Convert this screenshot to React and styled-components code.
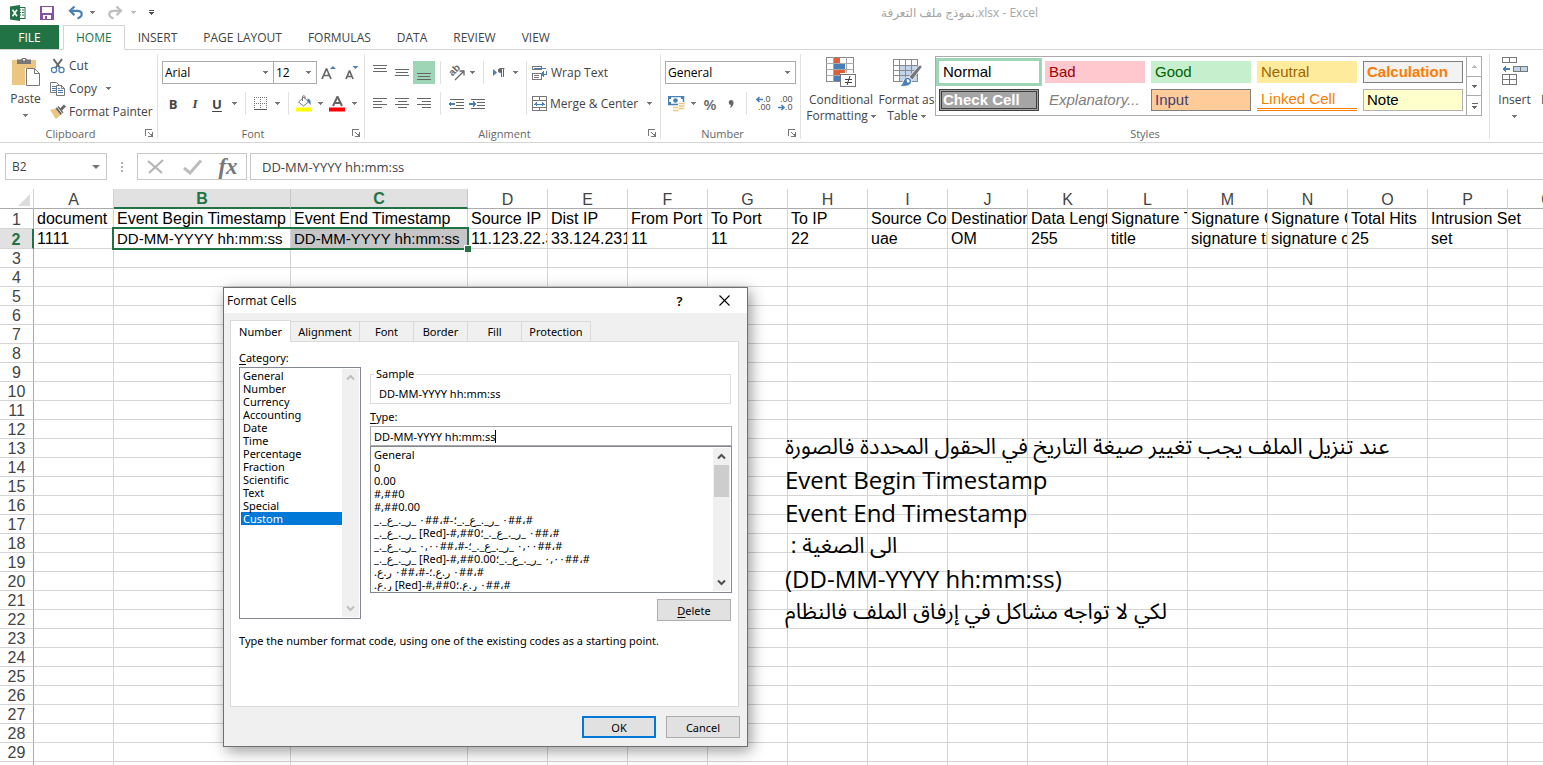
import React from "react";
import styled, { createGlobalStyle, css } from "styled-components";

const ui = '"Open Sans", "Noto Sans", "DejaVu Sans", sans-serif';
const dlg = '"Noto Sans", "Open Sans", "DejaVu Sans", sans-serif';
const arial = '"Liberation Sans", Arial, sans-serif';
const GREEN = "#217346";
const GRAY = "#777";
const BLUE = "#4a7fb5";

const Global = createGlobalStyle`
  *, *::before, *::after { box-sizing: border-box; }
  html, body { margin: 0; height: 100%; overflow: hidden; background: #fff; }
  body { font-family: ${ui}; font-size: 12px; color: #444; }
  button, input, select { font: inherit; color: inherit; margin: 0; padding: 0; border: 0; background: none; border-radius: 0; outline: none; }
  svg { display: block; flex: none; }
`;

const Window = styled.div`
  display: flex;
  flex-direction: column;
  height: 100vh;
`;

/* ---------- title bar and tabs ---------- */
const TitleBar = styled.header`
  display: grid;
  grid-template-columns: 376px 1fr;
  align-items: center;
  height: 25px;
  flex: none;
`;
const QuickAccess = styled.div`
  display: flex;
  align-items: center;
  height: 22px;
  padding-left: 9px;
`;
const QuickButton = styled.button`
  display: flex;
  align-items: center;
  justify-content: center;
  width: ${(p) => p.$w}px;
  height: 22px;
`;
const Caption = styled.h1`
  margin: 0;
  font-size: 12px;
  font-weight: 400;
  text-align: center;
  color: #a6a6a6;
`;
const Tabs = styled.nav`
  display: flex;
  height: 25px;
  flex: none;
  border-bottom: 1px solid #d4d4d4;
`;
const FileTab = styled.button`
  width: 59px;
  height: 24px;
  margin-right: 4px;
  background: ${GREEN};
  color: #fff;
`;
const Tab = styled.button`
  height: 25px;
  padding: 0 13px;
  ${(p) =>
    p.$active &&
    css`
      padding: 0 12px;
      color: ${GREEN};
      background: #fff;
      border: 1px solid #d4d4d4;
      border-bottom-color: #fff;
    `}
`;

/* ---------- ribbon ---------- */
const Ribbon = styled.div`
  display: flex;
  height: 93px;
  flex: none;
  border-bottom: 1px solid #d4d4d4;
  overflow: hidden;
`;
const Group = styled.section`
  display: flex;
  flex-direction: column;
  flex: none;
  width: ${(p) => p.$w}px;
  margin: 4px 0 3px;
  border-right: 1px solid #e1e1e1;
`;
const GroupBody = styled.div`
  display: flex;
  flex: 1;
  min-height: 0;
  padding: ${(p) => p.$pad || "0"};
`;
const GroupFoot = styled.div`
  display: flex;
  align-items: center;
  height: 12px;
  color: #666;
  h2 {
    flex: 1;
    margin: 0;
    font-size: 11px;
    font-weight: 400;
    text-align: center;
  }
`;
const Launcher = styled.button`
  width: 16px;
  height: 12px;
  display: flex;
  align-items: center;
  justify-content: center;
`;
const Stack = styled.div`
  display: flex;
  flex-direction: column;
  gap: ${(p) => p.$gap || 0}px;
`;
const Row = styled.div`
  display: flex;
  align-items: center;
  height: 23px;
`;
const Tool = styled.button`
  display: flex;
  align-items: center;
  justify-content: center;
  flex: none;
  width: ${(p) => p.$w || 22}px;
  height: 23px;
  background: ${(p) => (p.$on ? "#9fd5b7" : "none")};
`;
const LabelTool = styled.button`
  display: flex;
  align-items: center;
  gap: 3px;
  height: 23px;
  white-space: nowrap;
`;
const BigTool = styled.button`
  display: flex;
  flex-direction: column;
  align-items: center;
  justify-content: flex-start;
  flex: none;
  width: ${(p) => p.$w}px;
  padding-top: 3px;
  line-height: 16px;
  white-space: nowrap;
  svg.big { margin-bottom: ${(p) => p.$gap || 4}px; }
`;
const BigLine = styled.span`
  display: flex;
  align-items: center;
  gap: 3px;
  height: 16px;
`;
const Divider = styled.span`
  flex: none;
  width: 11px;
  height: ${(p) => p.$h || 23}px;
  background: linear-gradient(#e1e1e1, #e1e1e1) center / 1px 100% no-repeat;
`;
const Glyph = styled.span`
  font-size: 13px;
  font-weight: ${(p) => (p.$bold ? 700 : 400)};
  font-style: ${(p) => (p.$italic ? "italic" : "normal")};
  font-family: ${(p) => (p.$serif ? '"Liberation Serif", serif' : "inherit")};
  text-decoration: ${(p) => (p.$under ? "underline" : "none")};
  text-underline-offset: 2px;
`;
const PercentGlyph = styled.span`
  font-size: 15px;
  font-weight: 600;
  color: #666;
`;
const SelectWrap = styled.label`
  position: relative;
  display: flex;
  align-items: center;
  width: ${(p) => p.$w}px;
  height: 23px;
  border: 1px solid #ababab;
  margin-right: ${(p) => (p.$join ? -1 : 0)}px;
  color: #000;
  select {
    appearance: none;
    flex: 1;
    height: 21px;
    padding-left: 2px;
    min-width: 0;
  }
  svg { margin-right: 5px; pointer-events: none; }
`;

/* ---------- cell style gallery ---------- */
const Gallery = styled.div`
  display: flex;
  height: 60px;
  margin-top: 2px;
  border: 1px solid #ababab;
`;
const Swatches = styled.div`
  display: grid;
  grid-template-columns: repeat(5, 100px);
  grid-auto-rows: 22px;
  gap: 6px;
  padding: 4px 3px;
`;
const Swatch = styled.button`
  display: flex;
  align-items: center;
  padding: 0 4px 2px;
  font-family: ${arial};
  && { font-size: 15px; }
  white-space: nowrap;
  color: ${(p) => p.$fg};
  background: ${(p) => p.$bg || "#fff"};
  font-weight: ${(p) => (p.$bold ? 700 : 400)};
  font-style: ${(p) => (p.$italic ? "italic" : "normal")};
  ${(p) => p.$line && `box-shadow: inset 0 0 0 1px ${p.$line};`}
  ${(p) => p.$picked && "box-shadow: 0 0 0 3px #9fd5b7;"}
  ${(p) => p.$check && "border: 3px double #3f3f3f; padding: 0 1px 2px;"}
  ${(p) => p.$linked && "border-bottom: 3px double #ff8001; padding-bottom: 0;"}
`;
const GalleryScroll = styled.div`
  display: flex;
  flex-direction: column;
  width: 15px;
  border-left: 1px solid #ababab;
`;
const ScrollStep = styled.button`
  display: flex;
  flex: 1;
  align-items: center;
  justify-content: center;
  & + & { border-top: 1px solid #ababab; }
`;

/* ---------- formula bar ---------- */
const FormulaBar = styled.div`
  display: flex;
  flex: none;
  height: 46px;
  padding: 10px 0 9px 5px;
`;
const NameBox = styled.label`
  display: flex;
  align-items: center;
  width: 102px;
  border: 1px solid #c6c6c6;
  input { flex: 1; min-width: 0; padding-left: 6px; }
  svg { margin-right: 6px; }
`;
const Grip = styled.span`
  display: flex;
  align-items: center;
  justify-content: center;
  width: 30px;
`;
const FormulaTools = styled.div`
  display: flex;
  align-items: center;
  width: 110px;
  border: 1px solid #c6c6c6;
`;
const FxLabel = styled.span`
  font-family: "Liberation Serif", serif;
  font-size: 23px;
  font-style: italic;
  font-weight: 700;
  line-height: 22px;
  color: #777;
`;
const FormulaInput = styled.input`
  && {
    flex: 1;
    min-width: 0;
    margin-left: 3px;
    padding-left: 11px;
    border: 1px solid #c6c6c6;
    border-right: 0;
    font-size: 13px;
  }
`;

/* ---------- sheet ---------- */
const Sheet = styled.main`
  position: relative;
  flex: 1;
  min-height: 0;
  overflow: hidden;
`;
const Grid = styled.table`
  table-layout: fixed;
  width: max(100%, 1588px);
  border-spacing: 0;
  border-collapse: separate;
  font-family: ${arial};
  font-size: 16px;
  line-height: 16px;
  th, td { padding: 2px 0 0; font-weight: 400; }
`;
const ColHead = styled.th`
  height: 20px;
  border-right: 1px solid #d4d4d4;
  border-bottom: 1px solid #ababab;
  ${(p) =>
    p.$on &&
    css`
      && { font-weight: 700; }
      color: ${GREEN};
      background: #e1e1e1;
      border-right-color: #c6c6c6;
      border-bottom: 2px solid ${GREEN};
    `}
`;
const Corner = styled.th`
  border-right: 1px solid #d4d4d4;
  border-bottom: 1px solid #ababab;
  svg { margin-left: 18px; }
`;
const RowHead = styled.th`
  height: ${(p) => p.$h}px;
  border-right: 1px solid #ababab;
  border-bottom: 1px solid #d4d4d4;
  ${(p) =>
    p.$on &&
    css`
      && { font-weight: 700; }
      color: ${GREEN};
      background: #e1e1e1;
      border-right: 2px solid ${GREEN};
    `}
`;
const Cell = styled.td`
  position: relative;
  color: #000;
  border-right: 1px solid ${(p) => (p.$spill ? "transparent" : "#d4d4d4")};
  border-bottom: 1px solid #d4d4d4;
  background: ${(p) => (p.$shade ? "#c6c6c6" : "none")};
`;
const CellText = styled.div`
  height: 17px;
  padding-left: 3px;
  font-size: ${(p) => (p.$stamp ? 15 : 16)}px;
  white-space: nowrap;
  overflow: ${(p) => (p.$spill ? "visible" : "hidden")};
`;
const Selection = styled.span`
  position: absolute;
  z-index: 1;
  left: -2px;
  top: -2px;
  width: 357px;
  height: 23px;
  border: 2px solid ${GREEN};
  &::after {
    content: "";
    position: absolute;
    right: -4px;
    bottom: -4px;
    width: 7px;
    height: 7px;
    background: ${GREEN};
    border: 1px solid #fff;
    border-width: 1px 0 0 1px;
  }
`;
const Note = styled.div`
  position: absolute;
  left: 785px;
  top: 241px;
  color: #000;
  font-family: "Open Sans", "Noto Sans Arabic", "DejaVu Sans", sans-serif;
  font-size: 24px;
  line-height: 33px;
  white-space: pre;
  p { margin: 0; height: 33px; text-align: left; }
  p[dir="rtl"] { font-size: 22px; line-height: 31px; }
`;

/* ---------- dialog ---------- */
const Dialog = styled.section`
  position: absolute;
  z-index: 2;
  left: 223px;
  top: 98px;
  width: 525px;
  background: #f0f0f0;
  border: 1px solid #707070;
  box-shadow: 3px 4px 14px rgba(0, 0, 0, 0.4);
  font-family: ${dlg};
  font-size: 11px;
  color: #000;
`;
const DialogTitle = styled.div`
  display: flex;
  align-items: center;
  height: 25px;
  padding-left: 3px;
  background: #fff;
  h2 { flex: 1; margin: 0; font-size: 12px; font-weight: 400; font-family: ${ui}; }
`;
const TitleButton = styled.button`
  display: flex;
  align-items: center;
  justify-content: center;
  width: 45px;
  height: 24px;
  && { font-size: 13px; font-weight: 600; }
`;
const DialogTabs = styled.div`
  display: flex;
  align-items: flex-end;
  height: 28px;
  padding-left: 6px;
`;
const DialogTab = styled.button`
  height: 20px;
  width: ${(p) => p.$w}px;
  border: 1px solid #d9d9d9;
  border-left: 0;
  border-bottom: 0;
  ${(p) =>
    p.$active &&
    css`
      height: 22px;
      margin-bottom: -1px;
      border-left: 1px solid #d9d9d9;
      background: #fff;
      z-index: 1;
    `}
`;
const Pane = styled.div`
  height: 366px;
  margin: 0 8px 0 6px;
  padding: 9px 6px 0 8px;
  background: #fff;
  border: 1px solid #d9d9d9;
`;
const PaneColumns = styled.div`
  display: grid;
  grid-template-columns: 122px 362px;
  column-gap: 9px;
`;
const FieldLabel = styled.label`
  display: block;
  height: 16px;
  line-height: 14px;
  u { text-underline-offset: 2px; }
`;
const ListBox = styled.div`
  display: flex;
  height: ${(p) => p.$h}px;
  padding: 1px;
  background: #fff;
  border: 1px solid #828790;
  overflow: hidden;
`;
const Items = styled.ul`
  flex: 1;
  min-width: 0;
  margin: 0;
  padding: 0;
  list-style: none;
  overflow: hidden;
`;
const Item = styled.li`
  height: 13px;
  padding: 0 2px;
  line-height: 13px;
  text-align: left;
  white-space: pre;
  ${(p) => p.$on && "background: #0078d7; color: #fff;"}
`;
const ScrollBar = styled.div`
  display: flex;
  flex-direction: column;
  width: 17px;
  background: #f0f0f0;
`;
const ScrollEnd = styled.button`
  display: flex;
  align-items: center;
  justify-content: center;
  height: 17px;
`;
const Thumb = styled.span`
  height: ${(p) => p.$h}px;
  margin: 0 1px;
  background: #cdcdcd;
`;
const Spacer = styled.span`
  flex: 1;
`;
const Sample = styled.fieldset`
  height: 37px;
  margin: 9px 1px 6px 0;
  padding: 0 0 0 8px;
  border: 1px solid #dcdcdc;
  line-height: 14px;
  legend { padding: 0 2px; margin-left: -5px; }
  output { display: block; padding-top: 6px; }
`;
const SampleArea = styled.div`
  padding-top: 7px;
`;
const TypeBox = styled.div`
  display: flex;
  align-items: center;
  height: 20px;
  padding-left: 3px;
  border: 1px solid #ababab;
  background: #fff;
  input { field-sizing: content; }
`;
const TextCaret = styled.span`
  width: 1px;
  height: 13px;
  background: #000;
`;
const PushRow = styled.div`
  display: flex;
  justify-content: flex-end;
  gap: 10px;
  padding: ${(p) => p.$pad};
`;
const Push = styled.button`
  width: 74px;
  height: 22px;
  && {
    background: #e1e1e1;
    border: ${(p) => (p.$primary ? "2px solid #0078d7" : "1px solid #adadad")};
  }
  u { text-underline-offset: 2px; }
`;
const Hint = styled.p`
  margin: 12px 0 0;
  line-height: 16px;
  white-space: nowrap;
`;

/* ---------- icons ---------- */
const Svg = ({ w = 16, h = 16, crisp, ...rest }) => (
  <svg width={w} height={h} viewBox={`0 0 ${w} ${h}`} fill="none" aria-hidden="true" shapeRendering={crisp ? "crispEdges" : undefined} {...rest} />
);
const Caret = ({ color = GRAY }) => (
  <Svg w={5} h={3} crisp><path d="M0 0h5v1H0zM1 1h3v1H1zM2 2h1v1H2z" fill={color} /></Svg>
);
const CaretBig = () => (
  <Svg w={8} h={4}><path d="M0 0h8L4 4z" fill={GRAY} /></Svg>
);
const LaunchIcon = () => (
  <Svg w={9} h={8} crisp>
    <path d="M1 7V1h6" stroke={GRAY} transform="translate(-.5 -.5)" />
    <path d="M3 3h1v1H3zM4 4h1v1H4zM7 3h1v5H3V7h3V6H5V5h2z" fill={GRAY} />
  </Svg>
);
const ExcelIcon = () => (
  <Svg w={18} h={16}>
    <rect x="9" y="2.500" width="7" height="11" fill="#fff" stroke={GREEN} />
    <path d="M10 5h5M10 7.500h5M10 10h5" stroke={GREEN} />
    <path d="M12.500 3v10" stroke="#fff" />
    <path d="M1 1.500 11 0v16L1 14.500z" fill={GREEN} />
    <path d="m3.500 4.800 4.500 6.400M8 4.800l-4.500 6.400" stroke="#fff" strokeWidth="1.600" />
  </Svg>
);
const SaveIcon = () => (
  <Svg w={14} h={14} crisp>
    <path d="M0 0h14v14H0z" fill="#8550a5" />
    <path d="M2 1h10v6H2zM3 9h8v4H3z" fill="#fff" />
    <path d="M5 10h2v3H5z" fill="#8550a5" />
  </Svg>
);
const UndoIcon = ({ flip, color }) => (
  <Svg w={16} h={14}>
    <g transform={flip ? "matrix(-1 0 0 1 16 0)" : undefined}>
      <path d="M2.500 4.800h6.800c2.800 0 4.400 1.500 4.400 3.500 0 2.200-1.800 3.400-4.200 4.200" stroke={color} strokeWidth="2.200" />
      <path d="M6.500.5 2 4.800l4.500 4.300" stroke={color} strokeWidth="2.200" />
    </g>
  </Svg>
);
const CustomizeIcon = () => (
  <Svg w={6} h={6} crisp><path d="M0 0h5v1H0zM0 2h5v1H0zM1 3h3v1H1zM2 4h1v1H2z" fill="#555" /></Svg>
);
const PasteIcon = () => (
  <Svg w={30} h={30} className="big">
    <path d="M1 3h24v25H1z" fill="#ecc581" />
    <path d="M6 2.500h4C10 .5 16 .5 16 2.500h4V7H6z" fill="#777" />
    <path d="M12 2h2v1.500h-2z" fill="#fff" />
    <path d="M15.500 12.500h8l5 5v12h-13z" fill="#fff" stroke="#fff" strokeWidth="3" />
    <path d="M15.500 11.500h8l5 5v12h-13z" fill="#fff" stroke="#777" />
    <path d="M23.500 11.500v5h5" stroke="#777" />
  </Svg>
);
const CutIcon = () => (
  <Svg>
    <path d="M3.500 1 10 10M12 1 5.500 10" stroke="#666" strokeWidth="2" />
    <circle cx="4" cy="12" r="2.600" stroke={BLUE} strokeWidth="1.200" />
    <circle cx="11.500" cy="12" r="2.600" stroke={BLUE} strokeWidth="1.200" />
  </Svg>
);
const CopyIcon = () => (
  <Svg>
    <path d="M.5 1.500h6l3 3v7h-9z" fill="#fff" stroke="#777" />
    <path d="M2 5.500h4M2 7.500h4M2 9.500h4" stroke={BLUE} />
    <path d="M6.500 4.500h5l3 3v7h-8z" fill="#fff" stroke="#777" />
    <path d="M11.500 4.500v3h3" stroke="#777" />
    <path d="M8 9.500h5M8 11.500h5M8 7.500h2" stroke={BLUE} />
  </Svg>
);
const PainterIcon = () => (
  <Svg>
    <path d="m0 6 6-1.500L10.500 11 6 15c-1-1-2-2-2.500-4z" fill="#ecc581" />
    <path d="m5.500 4.500 3-2.500 5 6.500-3 2.500z" fill="#666" />
    <path d="m11 5.500 4-4" stroke="#666" strokeWidth="3" />
    <path d="m7.200 3 5.300 7" stroke="#fff" strokeWidth=".8" />
  </Svg>
);
const FontSizeIcon = ({ small }) => (
  <Svg w={16} h={16}>
    <path d={small ? "m3 14 3.300-8h.4L10 14M4.500 11.500h4" : "m1 14 4.300-10h.4L10 14M2.800 10.500h5.500"} stroke="#666" strokeWidth="1.700" />
    <path d={small ? "M9.500 1h6l-3 3z" : "m9 4 3-3 3 3z"} fill={BLUE} />
  </Svg>
);
const BordersIcon = () => (
  <Svg w={14} h={14} crisp>
    <path d="M0 .5h14M0 6.500h14M.5 0v14M6.500 0v14M12.500 0v14" stroke="#777" strokeDasharray="1 1" />
    <path d="M0 12.500h13" stroke="#555" />
  </Svg>
);
const FillIcon = () => (
  <Svg w={17} h={17}>
    <path d="M2.500 7 8 2l4.500 5L7.500 11z" fill="#fff" stroke="#777" />
    <path d="M6.500 6V1.500C6.500.5 9 .5 9 1.500V4" stroke="#777" />
    <path d="M11.500 3.500c3 .5 4 3 2.800 7-.8-2-1.300-3-2.800-3.500z" fill={BLUE} />
    <path d="M0 12.500h16v4H0z" fill="#ff0" />
  </Svg>
);
const FontColorIcon = () => (
  <Svg w={17} h={17}>
    <path d="m4 11 4.300-9h.4l4.300 9M5.500 8h6" stroke="#666" strokeWidth="2" />
    <path d="M0 12.500h16v4H0z" fill="red" />
  </Svg>
);
const lineSets = {
  top: [[0, 14, 0], [1, 12, 3], [0, 14, 6]],
  middle: [[0, 14, 4], [1, 12, 7], [0, 14, 10]],
  bottom: [[0, 14, 8], [1, 12, 11], [0, 14, 14]],
  left: [[0, 14, 2], [0, 9, 5], [0, 14, 8], [0, 9, 11]],
  center: [[0, 14, 2], [3, 9, 5], [0, 14, 8], [3, 9, 11]],
  right: [[0, 14, 2], [5, 9, 5], [0, 14, 8], [5, 9, 11]],
};
const LinesIcon = ({ kind }) => (
  <Svg w={14} h={16} crisp>
    {lineSets[kind].map(([x, w, y]) => <rect key={y} x={x} y={y} width={w} height="1" fill="#666" />)}
  </Svg>
);
const OrientationIcon = () => (
  <Svg w={17} h={16}>
    <text transform="translate(4.500 11.500) rotate(-45)" fontSize="10" fontWeight="700" fill="#666" fontFamily="Liberation Sans">ab</text>
    <path d="m7 15 8.500-8.500M11.500 6H16v4.500" stroke="#666" strokeWidth="1.300" />
  </Svg>
);
const DirectionIcon = () => (
  <Svg w={14} h={12}>
    <path d="M1 2v7l4-3.500z" fill={BLUE} />
    <path d="M12.500 1.500h-4a2 2 0 0 0 0 4h1M9.500 1.500V10M11.500 1.500V10" stroke="#666" />
    <path d="M9 1.500H8a2 2 0 0 0 0 4h1z" fill="#666" />
  </Svg>
);
const IndentIcon = ({ out }) => (
  <Svg w={16} h={12} crisp>
    <path d="M2 1.500h14M8 4.500h8M8 7.500h8M2 10.500h14" stroke="#666" />
    <path d={out ? "M0 6l3-3v2h4v2H3v2z" : "M7 6 4 3v2H0v2h4v2z"} fill={BLUE} />
  </Svg>
);
const WrapIcon = () => (
  <Svg w={16} h={16} crisp>
    <path d="M.5 1.500h9v3h-9zM.5 8.500h9v6h-9z" stroke="#777" />
    <path d="M2 3.500h12" stroke={BLUE} />
    <path d="M2 10.500h5M2 12.500h5" stroke="#777" />
    <path d="M14.500 6v3h-4" stroke={BLUE} />
    <path d="M8 9l4-3v6z" fill={BLUE} />
  </Svg>
);
const MergeIcon = () => (
  <Svg w={15} h={15} crisp>
    <path d="M.5.5h14v14H.5zM0 4.500h15M0 11.500h15M7.500 0v4M7.500 11v4" stroke="#777" />
    <path d="M2 8h11" stroke={BLUE} />
    <path d="M2 8l3-2v4zM13 8l-3-2v4z" fill={BLUE} />
  </Svg>
);
const CurrencyIcon = () => (
  <Svg w={17} h={16}>
    <path d="M.5.5h15v8H.5z" fill="#fff" stroke={BLUE} strokeWidth="1.500" />
    <circle cx="7.500" cy="4.500" r="2.300" fill={BLUE} />
    <path d="M1 1h2v2H1zM13 1h2v2h-2zM1 6h2v2H1z" fill={BLUE} />
    <path d="M10 6h6.500v8H10zM5 10h5.500v6H5z" fill="#fff" />
    <path d="M10.500 7.500h6M10.500 10h6M10.500 12.500h6M5 11.500h5M5 14.500h5.500" stroke="#ecc581" strokeWidth="1.700" />
  </Svg>
);
const CommaIcon = () => (
  <Svg w={8} h={10}><path d="M4 1c3 0 3 3.500 1.800 5.500C5 8 4 8.500 2.500 9c1-1 1.500-2 1.500-3C1 6 1 1 4 1z" fill="#666" /></Svg>
);
const DecimalIcon = ({ less }) => (
  <Svg w={15} h={15}>
    <g fontFamily="Liberation Sans" fontSize="9" fill="#555">
      <text x={less ? 2 : 7} y="6">{less ? ".00" : ".0"}</text>
      <text x={less ? 7 : 2} y="14">{less ? ".0" : ".00"}</text>
    </g>
    <path d={less ? "M0 11.500h6M3.500 9 6 11.500 3.500 14" : "M1 3.500h6M3.500 1 1 3.500 3.500 6"} stroke={BLUE} strokeWidth="1.600" />
  </Svg>
);
const ConditionalIcon = () => (
  <Svg w={30} h={31} crisp className="big">
    <path d="M.5.5h27v24H.5z" fill="#fff" stroke="#888" />
    <path d="M8 1h6v5H8zM8 13h11v5H8z" fill="#d9603b" />
    <path d="M8 7h11v5H8zM8 19h6v5H8z" fill={BLUE} />
    <path d="M0 6.500h28M0 12.500h28M0 18.500h28M7.500 0v25M20.500 0v25" stroke="#aaa" />
    <path d="M14 16h16v15H14z" fill="#fff" />
    <path d="M14.500 17.500h15v12h-15z" fill="#fff" stroke="#777" />
    <path d="M19 22.500h7M19 25.500h7M24 19l-3 9" stroke="#444" shapeRendering="auto" />
  </Svg>
);
const TableIcon = () => (
  <Svg w={30} h={31} className="big">
    <path d="M1 2h24v23H1z" fill="#fff" />
    <path d="M7 8h18v17H7z" fill="#c1d5ea" />
    <path d="M1.500 2.500h24v22h-24zM1 8.500h25M1 13.500h25M1 18.500h25M7.500 2v23M13.500 2v23M19.500 2v23" stroke="#8a8a8a" shapeRendering="crispEdges" />
    <path d="M27 8.500c1.500-.8 3 0 3 1.500L20.500 23 17 20z" fill="#777" stroke="#fff" strokeWidth=".8" />
    <path d="M14 20.500c3-1 6 1.500 5.500 4.500-1 4-6 5-12 4 4-1 3-7 6.500-8.500z" fill={BLUE} stroke="#fff" strokeWidth=".8" />
    <path d="M14.500 22.500c2-.8 3.500.5 3 2.200-.6 1.200-1.700 1.200-2.500.3" fill="#fff" />
  </Svg>
);
const InsertIcon = () => (
  <Svg w={28} h={29} crisp className="big">
    <path d="M1.500.5h14v5h-14zM8.500 0v6M1.500 17.500h14v10h-14zM8.500 17v11M1 22.500h15" stroke="#777" />
    <path d="M12.500 9.500h14v5h-14z" fill="#c1d5ea" stroke="#777" />
    <path d="M19.500 9v6" stroke="#777" />
    <path d="M1 12l4-3v2h4v2H5v2z" fill={BLUE} />
  </Svg>
);
const StepIcon = ({ kind }) => (
  <Svg w={7} h={8} crisp>
    {kind === "up" && <path d="M3 3h1v1H3zM2 4h3v1H2zM1 5h5v1H1z" fill="#bbb" />}
    {kind === "down" && <path d="M1 3h5v1H1zM2 4h3v1H2zM3 5h1v1H3z" fill="#666" />}
    {kind === "more" && <path d="M1 1h6v1H1zM1 4h5v1H1zM2 5h3v1H2zM3 6h1v1H3z" fill="#666" />}
  </Svg>
);
const CancelIcon = () => <Svg w={18} h={16}><path d="m1 2 14 12M16 1 2 14" stroke="#b5b5b5" strokeWidth="2.200" /></Svg>;
const CheckIcon = () => <Svg w={20} h={16}><path d="m1 9 6 5L18 1.500" stroke="#bdbdbd" strokeWidth="3" /></Svg>;
const Chevron = ({ up, color = "#505050" }) => (
  <Svg w={9} h={7}><path d={up ? "M1 5.500 4.500 2 8 5.500" : "M1 1.500 4.500 5 8 1.500"} stroke={color} strokeWidth="2" /></Svg>
);
const CloseIcon = () => <Svg w={11} h={11}><path d="m.5.5 10 10M10.500.5l-10 10" stroke="#000" strokeWidth="1.100" /></Svg>;

/* ---------- data ---------- */
const tabs = ["HOME", "INSERT", "PAGE LAYOUT", "FORMULAS", "DATA", "REVIEW", "VIEW"];
const styleCells = [
  { name: "Normal", fg: "#000", picked: true },
  { name: "Bad", fg: "#9c0006", bg: "#ffc7ce" },
  { name: "Good", fg: "#006100", bg: "#c6efce" },
  { name: "Neutral", fg: "#9c6500", bg: "#ffeb9c" },
  { name: "Calculation", fg: "#fa7d00", bg: "#f2f2f2", line: "#7f7f7f", bold: true },
  { name: "Check Cell", fg: "#fff", bg: "#a5a5a5", bold: true, check: true },
  { name: "Explanatory...", fg: "#7f7f7f", italic: true },
  { name: "Input", fg: "#3f3f76", bg: "#ffcc99", line: "#7f7f7f" },
  { name: "Linked Cell", fg: "#fa7d00", linked: true },
  { name: "Note", fg: "#000", bg: "#ffffcc", line: "#b2b2b2" },
];
const columns = "ABCDEFGHIJKLMNOPQ".split("");
const colWidth = (c) => (c === "B" || c === "C" ? 177 : 80);
const rows = {
  1: ["document I", "Event Begin Timestamp", "Event End Timestamp", "Source IP", "Dist IP", "From Port", "To Port", "To IP", "Source Co", "Destination", "Data Lengt", "Signature T", "Signature C", "Signature C", "Total Hits", "Intrusion Set"],
  2: ["1111", "DD-MM-YYYY hh:mm:ss", "DD-MM-YYYY hh:mm:ss", "11.123.22.3", "33.124.231", "11", "11", "22", "uae", "OM", "255", "title", "signature ti", "signature c", "25", "set"],
};
const categories = ["General", "Number", "Currency", "Accounting", "Date", "Time", "Percentage", "Fraction", "Scientific", "Text", "Special", "Custom"];
const ltr = (s) => `\u2066${s}\u2069`;
const formats = [
  ["General"], ["0"], ["0.00"], ["#,##0"], ["#,##0.00"],
  ["#،##٠ _ر_._ع_._؛-#،##٠ _ر_._ع_._", true],
  [`#،##٠ _ر_._ع_._؛${ltr("[Red]-#,##0")} _ر_._ع_._`, true],
  ["#،##٠,٠٠ _ر_._ع_._؛-#،##٠,٠٠ _ر_._ع_._", true],
  [`#،##٠,٠٠ _ر_._ع_._؛${ltr("[Red]-#,##0.00")} _ر_._ع_._`, true],
  ["#،##٠ ر.ع.؛-#،##٠ ر.ع.", true],
  [`#،##٠ ر.ع.؛${ltr("[Red]-#,##0")} ر.ع.`, true],
];
const dialogTabs = [["Number", 61], ["Alignment", 69], ["Font", 54], ["Border", 54], ["Fill", 54], ["Protection", 69]];

const Drop = ({ label }) => <Tool $w={12} aria-label={label}><Caret /></Tool>;
const RibbonGroup = ({ title, w, pad, launcher = true, children }) => (
  <Group $w={w}>
    <GroupBody $pad={pad}>{children}</GroupBody>
    <GroupFoot>
      <h2>{title}</h2>
      {launcher && <Launcher aria-label={`${title} settings`}><LaunchIcon /></Launcher>}
    </GroupFoot>
  </Group>
);

function RibbonArea() {
  return (
    <Ribbon>
      <RibbonGroup title="Clipboard" w={158} pad="0 0 0 1px">
        <BigTool $w={49}><PasteIcon /><BigLine>Paste</BigLine><BigLine><Caret /></BigLine></BigTool>
        <Stack>
          <LabelTool><CutIcon />Cut</LabelTool>
          <Row><LabelTool><CopyIcon />Copy</LabelTool><Tool $w={22} aria-label="Copy options"><Caret /></Tool></Row>
          <LabelTool><PainterIcon />Format Painter</LabelTool>
        </Stack>
      </RibbonGroup>

      <RibbonGroup title="Font" w={207} pad="7px 0 0 4px">
        <Stack $gap={8}>
          <Row>
            <SelectWrap $w={112} $join><select aria-label="Font"><option>Arial</option></select><Caret /></SelectWrap>
            <SelectWrap $w={44}><select aria-label="Font size"><option>12</option></select><Caret /></SelectWrap>
            <Tool $w={24} aria-label="Increase font size"><FontSizeIcon /></Tool>
            <Tool $w={20} aria-label="Decrease font size"><FontSizeIcon small /></Tool>
          </Row>
          <Row>
            <Tool aria-label="Bold"><Glyph $bold>B</Glyph></Tool>
            <Tool aria-label="Italic"><Glyph $bold $italic $serif>I</Glyph></Tool>
            <Tool aria-label="Underline"><Glyph $bold $under>U</Glyph></Tool>
            <Drop label="Underline options" />
            <Divider />
            <Tool $w={20} aria-label="Borders"><BordersIcon /></Tool>
            <Drop label="Border options" />
            <Divider />
            <Tool $w={20} aria-label="Fill colour"><FillIcon /></Tool>
            <Drop label="Fill options" />
            <Tool aria-label="Font colour"><FontColorIcon /></Tool>
            <Drop label="Font colour options" />
          </Row>
        </Stack>
      </RibbonGroup>

      <RibbonGroup title="Alignment" w={296} pad="7px 0 0 4px">
        <Stack $gap={8}>
          <Row>
            <Tool aria-label="Top align"><LinesIcon kind="top" /></Tool>
            <Tool aria-label="Middle align"><LinesIcon kind="middle" /></Tool>
            <Tool $on aria-label="Bottom align"><LinesIcon kind="bottom" /></Tool>
            <Divider />
            <Tool $w={20} aria-label="Orientation"><OrientationIcon /></Tool>
            <Drop label="Orientation options" />
            <Divider />
            <Tool $w={20} aria-label="Text direction"><DirectionIcon /></Tool>
            <Drop label="Direction options" />
          </Row>
          <Row>
            <Tool aria-label="Align left"><LinesIcon kind="left" /></Tool>
            <Tool aria-label="Align centre"><LinesIcon kind="center" /></Tool>
            <Tool aria-label="Align right"><LinesIcon kind="right" /></Tool>
            <Divider />
            <Tool $w={20} aria-label="Decrease indent"><IndentIcon out /></Tool>
            <Tool aria-label="Increase indent"><IndentIcon /></Tool>
          </Row>
        </Stack>
        <Divider $h={54} />
        <Stack $gap={8}>
          <LabelTool><WrapIcon />Wrap Text</LabelTool>
          <Row><LabelTool><MergeIcon />Merge &amp; Center</LabelTool><Tool $w={22} aria-label="Merge options"><Caret /></Tool></Row>
        </Stack>
      </RibbonGroup>

      <RibbonGroup title="Number" w={140} pad="7px 0 0 4px">
        <Stack $gap={8}>
          <SelectWrap $w={131}><select aria-label="Number format"><option>General</option></select><Caret /></SelectWrap>
          <Row>
            <Tool aria-label="Accounting format"><CurrencyIcon /></Tool>
            <Drop label="Currency options" />
            <Tool aria-label="Percent"><PercentGlyph>%</PercentGlyph></Tool>
            <Tool $w={20} aria-label="Comma style"><CommaIcon /></Tool>
            <Divider />
            <Tool aria-label="Increase decimal"><DecimalIcon /></Tool>
            <Tool aria-label="Decrease decimal"><DecimalIcon less /></Tool>
          </Row>
        </Stack>
      </RibbonGroup>

      <RibbonGroup title="Styles" w={689} pad="0 0 0 3px" launcher={false}>
        <BigTool $w={74}>
          <ConditionalIcon />
          <BigLine>Conditional</BigLine>
          <BigLine>Formatting<Caret /></BigLine>
        </BigTool>
        <BigTool $w={57}>
          <TableIcon />
          <BigLine>Format as</BigLine>
          <BigLine>Table<Caret /></BigLine>
        </BigTool>
        <Gallery>
          <Swatches>
            {styleCells.map((s) => (
              <Swatch key={s.name} $fg={s.fg} $bg={s.bg} $line={s.line} $bold={s.bold} $italic={s.italic} $picked={s.picked} $check={s.check} $linked={s.linked}>
                {s.name}
              </Swatch>
            ))}
          </Swatches>
          <GalleryScroll>
            {["up", "down", "more"].map((k) => <ScrollStep key={k} aria-label={`Styles ${k}`}><StepIcon kind={k} /></ScrollStep>)}
          </GalleryScroll>
        </Gallery>
      </RibbonGroup>

      <RibbonGroup title="" w={160} launcher={false}>
        <BigTool $w={49} $gap={6}><InsertIcon /><BigLine>Insert</BigLine><BigLine><Caret /></BigLine></BigTool>
        <BigTool $w={40} $gap={6}><InsertIcon /><BigLine>Delete</BigLine><BigLine><Caret /></BigLine></BigTool>
      </RibbonGroup>
    </Ribbon>
  );
}

function SheetGrid() {
  return (
    <Grid>
      <colgroup>
        <col width="34" />
        {columns.map((c) => <col key={c} width={colWidth(c)} />)}
        <col />
      </colgroup>
      <thead>
        <tr>
          <Corner aria-label="Select all"><Svg w={12} h={12}><path d="M12 0v12H0z" fill="#dcdcdc" /></Svg></Corner>
          {columns.map((c) => <ColHead key={c} scope="col" $on={c === "B" || c === "C"}>{c}</ColHead>)}
          <ColHead />
        </tr>
      </thead>
      <tbody>
        {Array.from({ length: 30 }, (_, i) => i + 1).map((r) => (
          <tr key={r}>
            <RowHead scope="row" $h={r < 3 ? 20 : 19} $on={r === 2}>{r}</RowHead>
            {columns.map((c, j) => {
              const value = rows[r]?.[j];
              const spill = r === 1 && c === "P";
              const picked = r === 2 && (c === "B" || c === "C");
              return (
                <Cell key={c} $spill={spill} $shade={r === 2 && c === "C"}>
                  {value && <CellText $spill={spill} $stamp={picked}>{value}</CellText>}
                  {r === 2 && c === "B" && <Selection />}
                </Cell>
              );
            })}
            <Cell />
          </tr>
        ))}
      </tbody>
    </Grid>
  );
}

function FormatCells() {
  return (
    <Dialog role="dialog" aria-labelledby="dlg-title">
      <DialogTitle>
        <h2 id="dlg-title">Format Cells</h2>
        <TitleButton aria-label="Help">?</TitleButton>
        <TitleButton aria-label="Close"><CloseIcon /></TitleButton>
      </DialogTitle>
      <DialogTabs role="tablist">
        {dialogTabs.map(([t, w], i) => <DialogTab key={t} role="tab" $w={w} $active={i === 0}>{t}</DialogTab>)}
      </DialogTabs>
      <Pane>
        <PaneColumns>
          <div>
            <FieldLabel as="div" id="cat"><u>C</u>ategory:</FieldLabel>
            <ListBox $h={252}>
              <Items role="listbox" aria-labelledby="cat">
                {categories.map((c) => <Item key={c} role="option" aria-selected={c === "Custom"} $on={c === "Custom"}>{c}</Item>)}
              </Items>
              <ScrollBar>
                <ScrollEnd aria-label="Scroll up"><Chevron up color="#bfbfbf" /></ScrollEnd>
                <Spacer />
                <ScrollEnd aria-label="Scroll down"><Chevron color="#bfbfbf" /></ScrollEnd>
              </ScrollBar>
            </ListBox>
          </div>
          <SampleArea>
            <Sample>
              <legend>Sample</legend>
              <output>DD-MM-YYYY hh:mm:ss</output>
            </Sample>
            <FieldLabel htmlFor="fmt"><u>T</u>ype:</FieldLabel>
            <TypeBox>
              <input id="fmt" defaultValue="DD-MM-YYYY hh:mm:ss" />
              <TextCaret />
            </TypeBox>
            <ListBox $h={147}>
              <Items role="listbox" aria-label="Format codes">
                {formats.map(([f, rtl]) => <Item key={f} role="option" dir={rtl ? "rtl" : "ltr"}>{f}</Item>)}
              </Items>
              <ScrollBar>
                <ScrollEnd aria-label="Scroll up"><Chevron up /></ScrollEnd>
                <Thumb $h={32} />
                <Spacer />
                <ScrollEnd aria-label="Scroll down"><Chevron /></ScrollEnd>
              </ScrollBar>
            </ListBox>
            <PushRow $pad="6px 1px 0 0"><Push><u>D</u>elete</Push></PushRow>
          </SampleArea>
        </PaneColumns>
        <Hint>Type the number format code, using one of the existing codes as a starting point.</Hint>
      </Pane>
      <PushRow $pad="9px 7px 8px">
        <Push $primary>OK</Push>
        <Push>Cancel</Push>
      </PushRow>
    </Dialog>
  );
}

export default function App() {
  return (
    <>
      <Global />
      <Window>
        <TitleBar>
          <QuickAccess>
            <QuickButton $w={18} aria-label="Excel"><ExcelIcon /></QuickButton>
            <QuickButton $w={40} aria-label="Save"><SaveIcon /></QuickButton>
            <QuickButton $w={18} aria-label="Undo"><UndoIcon color={BLUE} /></QuickButton>
            <QuickButton $w={14} aria-label="Undo list"><Caret /></QuickButton>
            <QuickButton $w={32} aria-label="Redo"><UndoIcon flip color="#bdbdbd" /></QuickButton>
            <QuickButton $w={5} aria-label="Redo list"><Caret color="#bdbdbd" /></QuickButton>
            <QuickButton $w={32} aria-label="Customize toolbar"><CustomizeIcon /></QuickButton>
          </QuickAccess>
          <Caption>نموذج ملف التعرفة.xlsx - Excel</Caption>
        </TitleBar>
        <Tabs>
          <FileTab>FILE</FileTab>
          {tabs.map((t, i) => <Tab key={t} $active={i === 0}>{t}</Tab>)}
        </Tabs>
        <RibbonArea />
        <FormulaBar>
          <NameBox><input aria-label="Name box" defaultValue="B2" /><CaretBig /></NameBox>
          <Grip><Svg w={2} h={12} crisp><path d="M0 1h2v2H0zM0 5h2v2H0zM0 9h2v2H0z" fill="#b0b0b0" /></Svg></Grip>
          <FormulaTools>
            <Tool $w={36} aria-label="Cancel"><CancelIcon /></Tool>
            <Tool $w={38} aria-label="Enter"><CheckIcon /></Tool>
            <Tool $w={32} aria-label="Insert function"><FxLabel>fx</FxLabel></Tool>
          </FormulaTools>
          <FormulaInput aria-label="Formula" defaultValue="DD-MM-YYYY hh:mm:ss" />
        </FormulaBar>
        <Sheet>
          <SheetGrid />
          <Note>
            <p dir="rtl">عند تنزيل الملف يجب تغيير صيغة التاريخ في الحقول المحددة فالصورة</p>
            <p>Event Begin Timestamp</p>
            <p>Event End Timestamp</p>
            <p dir="rtl">{"الى الصغية : "}</p>
            <p>(DD-MM-YYYY hh:mm:ss)</p>
            <p dir="rtl">لكي لا تواجه مشاكل في إرفاق الملف فالنظام</p>
          </Note>
          <FormatCells />
        </Sheet>
      </Window>
    </>
  );
}
